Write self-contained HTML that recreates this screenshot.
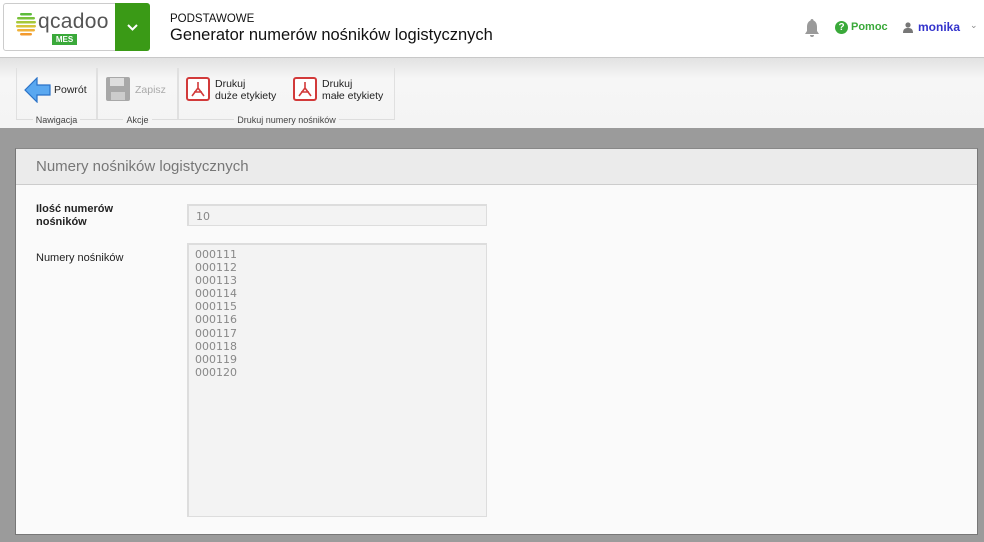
<!DOCTYPE html>
<html><head><meta charset="utf-8"><style>
*{margin:0;padding:0;box-sizing:border-box}
body{width:984px;height:542px;overflow:hidden;background:#9b9b9b;font-family:"Liberation Sans",sans-serif;position:relative}
.hdr{position:absolute;left:0;top:0;width:984px;height:58px;background:#fff;border-bottom:1px solid #c8c8c8}
.logo{position:absolute;left:3px;top:3px;width:113px;height:48px;border:1px solid #ccc;border-radius:3px 0 0 3px;background:#fff}
.drop{position:absolute;left:115px;top:3px;width:35px;height:48px;background:#3a9a16;border-radius:0 3px 3px 0}
.tb{position:absolute;left:0;top:58px;width:984px;height:70px;background:linear-gradient(#e2e2e2,#f6f6f6 30%,#f4f4f4)}
.grp{position:absolute;top:10px;height:52px;border:1px solid #e0e0e0;border-top:none;border-bottom:none}
.gl{position:absolute;font-size:9px;color:#444;top:115px}
.btn{position:absolute;font-size:10.5px;color:#222;line-height:12px}
.panel{position:absolute;left:15px;top:148px;width:963px;height:387px;background:#fafafa;border:1px solid #777;border-top:1px solid #888}
.ph{height:36px;background:#ebebeb;border-bottom:1px solid #ccc;font-size:15px;color:#777;padding:9px 0 0 20px}
.inp{position:absolute;left:187px;width:300px;background:#f3f3f3;border:1px solid #ddd;border-left:2px solid #ddd;border-top:2px solid #ddd;color:#888;font-size:11px;font-family:"DejaVu Sans",sans-serif}
.pdf{position:absolute;width:24px;height:24px;border:2px solid #d23a3a;border-radius:3px;background:#fff}
</style></head><body>
<div class="hdr">
 <div class="logo">
  <svg width="20" height="26" style="position:absolute;left:12px;top:8px" viewBox="0 0 20 26">
   <rect x="4" y="1" width="12" height="2.5" rx="1.2" fill="#5dbb3c"/>
   <rect x="1" y="5" width="18" height="2.5" rx="1.2" fill="#7ac13b"/>
   <rect x="0" y="9" width="20" height="2.5" rx="1.2" fill="#a6c83a"/>
   <rect x="0" y="13" width="20" height="2.5" rx="1.2" fill="#d6c43a"/>
   <rect x="1" y="17" width="18" height="2.5" rx="1.2" fill="#f0b23a"/>
   <rect x="4" y="21" width="12" height="2.5" rx="1.2" fill="#f39a2e"/>
  </svg>
  <div style="position:absolute;left:34px;top:6px;font-size:21px;color:#555;letter-spacing:0.3px">qcadoo</div>
  <div style="position:absolute;left:48px;top:30px;width:25px;height:11px;background:#3aa93a;color:#fff;font-size:8px;font-weight:bold;text-align:center;line-height:11px">MES</div>
 </div>
 <div class="drop"><svg width="35" height="48"><path d="M13 22l4.5 4.5L22 22" stroke="#fff" stroke-width="2" fill="none"/></svg></div>
 <div style="position:absolute;left:170px;top:13px;font-size:11.5px;color:#111">PODSTAWOWE</div>
 <div style="position:absolute;left:170px;top:26px;font-size:16.5px;color:#111">Generator numerów nośników logistycznych</div>
 <svg style="position:absolute;left:803px;top:18px" width="18" height="20"><path d="M9 1c-1 0-1.5.8-1.5 1.5C5 3.5 4 6 4 9v4l-2 3h14l-2-3V9c0-3-1-5.5-3.5-6.5C10.5 1.8 10 1 9 1zM7 17a2 2 0 004 0z" fill="#9a9a9a"/></svg>
 <div style="position:absolute;left:835px;top:21px;width:13px;height:13px;border-radius:50%;background:#3aa93a;color:#fff;font-size:10px;font-weight:bold;text-align:center;line-height:13px">?</div>
 <div style="position:absolute;left:851px;top:21px;font-size:11px;font-weight:bold;color:#3aa93a">Pomoc</div>
 <svg style="position:absolute;left:903px;top:22px" width="10" height="11"><circle cx="5" cy="3" r="2.6" fill="#777"/><path d="M0 11c0-4 2-5 5-5s5 1 5 5z" fill="#777"/></svg>
 <div style="position:absolute;left:918px;top:20px;font-size:12px;font-weight:bold;color:#3333cc">monika</div>
 <div style="position:absolute;left:970px;top:20px;font-size:9px;color:#888">⌄</div>
</div>
<div class="tb">
 <div class="grp" style="left:16px;width:81px"></div>
 <div class="grp" style="left:97px;width:81px"></div>
 <div class="grp" style="left:178px;width:217px"></div>
 <div style="position:absolute;left:16px;top:61px;width:379px;border-top:1px solid #ddd"></div>
</div>
<div class="gl" style="left:16px;width:81px;text-align:center"><span style="background:#f4f4f4;padding:0 3px">Nawigacja</span></div>
<div class="gl" style="left:97px;width:81px;text-align:center"><span style="background:#f4f4f4;padding:0 3px">Akcje</span></div>
<div class="gl" style="left:178px;width:217px;text-align:center"><span style="background:#f4f4f4;padding:0 3px">Drukuj numery nośników</span></div>
<svg style="position:absolute;left:24px;top:77px" width="27" height="26"><path d="M1 13L13 1v7h13v10H13v7z" fill="#5aa8f0" stroke="#2a72c8" stroke-width="1.2"/></svg>
<div class="btn" style="left:54px;top:84px">Powrót</div>
<svg style="position:absolute;left:106px;top:77px" width="24" height="24"><rect x="0" y="0" width="24" height="24" rx="2" fill="#a8a8a8"/><rect x="4" y="1" width="14" height="8" fill="#ddd"/><rect x="5" y="15" width="14" height="8" fill="#ccc"/></svg>
<div class="btn" style="left:135px;top:84px;color:#aaa">Zapisz</div>
<div class="pdf" style="left:186px;top:77px"><svg width="20" height="20"><path d="M10 3v6l-6 8M10 9l6 8M6 13h8" stroke="#d23a3a" stroke-width="1.6" fill="none"/></svg></div>
<div class="btn" style="left:215px;top:78px">Drukuj<br>duże etykiety</div>
<div class="pdf" style="left:293px;top:77px"><svg width="20" height="20"><path d="M10 3v6l-6 8M10 9l6 8M6 13h8" stroke="#d23a3a" stroke-width="1.6" fill="none"/></svg></div>
<div class="btn" style="left:322px;top:78px">Drukuj<br>małe etykiety</div>
<div class="panel"><div class="ph">Numery nośników logistycznych</div></div>
<div style="position:absolute;left:36px;top:203px;font-size:11px;font-weight:bold;color:#222;line-height:13px">Ilość numerów<br>nośników</div>
<div class="inp" style="top:204px;height:22px;padding:4px 0 0 7px">10</div>
<div style="position:absolute;left:36px;top:252px;font-size:11px;color:#222">Numery nośników</div>
<div class="inp" style="top:243px;height:274px;padding:3px 0 0 6px;line-height:13.1px">000111<br>000112<br>000113<br>000114<br>000115<br>000116<br>000117<br>000118<br>000119<br>000120</div>
</body></html>
